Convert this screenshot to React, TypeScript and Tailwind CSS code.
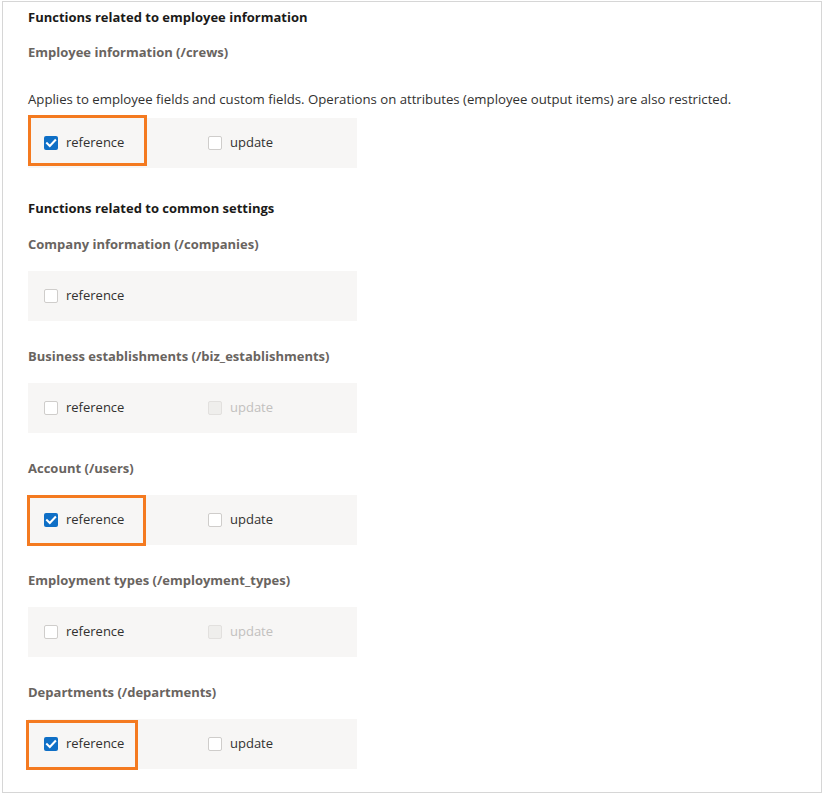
import React from "react";

type Opt = { label: string; checked?: boolean; disabled?: boolean };

function Box({ checked, disabled }: { checked?: boolean; disabled?: boolean }) {
  if (checked) {
    return (
      <span className="flex h-[14px] w-[14px] items-center justify-center rounded-[2px] bg-[#0f6fc6]">
        <svg width="12" height="12" viewBox="0 0 12 12">
          <path d="M2 6.2 L4.8 9 L10.2 3.2" fill="none" stroke="#fff" strokeWidth="2" strokeLinecap="square" />
        </svg>
      </span>
    );
  }
  return (
    <span
      className={
        disabled
          ? "h-[14px] w-[14px] rounded-[2px] border border-[#e2e0de] bg-[#efeeec]"
          : "h-[14px] w-[14px] rounded-[2px] border border-[#cfcdcb] bg-white"
      }
    />
  );
}

function Row({ opts, hl }: { opts: Opt[]; hl?: { w: number; top: number; h: number; left: number } }) {
  return (
    <div className="relative flex h-[50px] w-[329px] items-center bg-[#f7f6f5]">
      {opts.map((o, i) => (
        <div key={i} className="flex w-[164px] items-center gap-[8px] pl-[16px]">
          <Box checked={o.checked} disabled={o.disabled} />
          <span className={o.disabled ? "text-[13px] text-[#c2c0be]" : "text-[13px] text-[#323130]"}>{o.label}</span>
        </div>
      ))}
      {hl && (
        <div
          className="pointer-events-none absolute border-[3px] border-[#f47a20]"
          style={{ left: hl.left, top: hl.top, width: hl.w, height: hl.h }}
        />
      )}
    </div>
  );
}

function Title({ children, cls }: { children: React.ReactNode; cls?: string }) {
  return <div className={"text-[13px] font-bold leading-[20px] text-[#69645f] " + (cls ?? "")}>{children}</div>;
}

export default function App() {
  return (
    <div className="h-[794px] w-[823px] bg-white" style={{ fontFamily: '"Segoe UI", "Open Sans", "Noto Sans", sans-serif' }}>
      <div className="ml-[2px] mt-[1px] h-[792px] w-[820px] border border-[#d6d6d6] pl-[25px] pt-[5px]">
        <div className="text-[13px] font-bold leading-[20px] text-[#1b1a19]">Functions related to employee information</div>
        <Title cls="mt-[15px]">Employee information (/crews)</Title>
        <div className="mt-[27px] text-[13.2px] leading-[20px] text-[#323130]">
          Applies to employee fields and custom fields. Operations on attributes (employee output items) are also restricted.
        </div>
        <div className="mt-[9px]">
          <Row opts={[{ label: "reference", checked: true }, { label: "update" }]} hl={{ left: 0, top: -3, w: 119, h: 51 }} />
        </div>
        <div className="mt-[30px] text-[13px] font-bold leading-[20px] text-[#1b1a19]">Functions related to common settings</div>
        <Title cls="mt-[16px]">Company information (/companies)</Title>
        <div className="mt-[17px]">
          <Row opts={[{ label: "reference" }]} />
        </div>
        <Title cls="mt-[25px]">Business establishments (/biz_establishments)</Title>
        <div className="mt-[17px]">
          <Row opts={[{ label: "reference" }, { label: "update", disabled: true }]} />
        </div>
        <Title cls="mt-[25px]">Account (/users)</Title>
        <div className="mt-[17px]">
          <Row opts={[{ label: "reference", checked: true }, { label: "update" }]} hl={{ left: -1, top: 0, w: 119, h: 51 }} />
        </div>
        <Title cls="mt-[25px]">Employment types (/employment_types)</Title>
        <div className="mt-[17px]">
          <Row opts={[{ label: "reference" }, { label: "update", disabled: true }]} />
        </div>
        <Title cls="mt-[25px]">Departments (/departments)</Title>
        <div className="mt-[17px]">
          <Row opts={[{ label: "reference", checked: true }, { label: "update" }]} hl={{ left: -2, top: 1, w: 112, h: 50 }} />
        </div>
      </div>
    </div>
  );
}
